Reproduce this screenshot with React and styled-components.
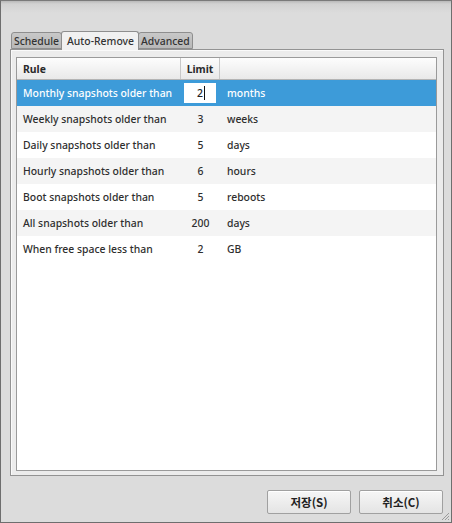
import React from 'react';
import styled, { createGlobalStyle } from 'styled-components';

const GlobalStyle = createGlobalStyle`
  html, body {
    margin: 0;
    padding: 0;
    background: #dcdcdc;
  }
  * {
    box-sizing: border-box;
  }
`;

const Window = styled.div`
  width: 452px;
  height: 523px;
  position: relative;
  display: flex;
  flex-direction: column;
  border: 1px solid #6e6e6e;
  border-top-color: #7a7a7a;
  background: linear-gradient(#b9b9b9 0px, #d2d2d2 3px, #dcdcdc 12px, #dcdcdc 100%);
  font-family: 'Noto Sans', 'DejaVu Sans', sans-serif;
  color: #2e2e2e;
  padding: 30px 8px 8px 9px;
`;

const TabBar = styled.div`
  display: flex;
  align-items: flex-end;
  padding-left: 1px;
  height: 18px;
  position: relative;
  z-index: 1;
`;

const Tab = styled.div`
  height: ${p => (p.$active ? '19px' : '17px')};
  margin-bottom: ${p => (p.$active ? '-1px' : '0')};
  padding: ${p => (p.$active ? '0 4px 0 5px' : '0 2px 0 2px')};
  display: flex;
  align-items: center;
  font-size: 10.4px;
  font-weight: 500;
  color: #333;
  border: 1px solid #8e8e8e;
  border-bottom: ${p => (p.$active ? 'none' : '1px solid #8e8e8e')};
  border-radius: 3px 3px 0 0;
  background: ${p => (p.$active
    ? '#f1f1f1'
    : 'linear-gradient(#c8c8c8, #b8b8b8)')};
  margin-right: -1px;
`;

const Pane = styled.div`
  flex: 1;
  display: flex;
  flex-direction: column;
  width: 434px;
  margin-bottom: 14px;
  border: 1px solid #939393;
  background: #ececec;
  padding: 7px 6px 4px 5px;
  box-shadow: inset 1px 1px 0 #fafafa;
`;

const Table = styled.div`
  flex: 1;
  background: #fff;
  border: 1px solid #9a9a9a;
  display: flex;
  flex-direction: column;
`;

const Header = styled.div`
  display: grid;
  grid-template-columns: 164px 39px 1fr;
  height: 22px;
  background: linear-gradient(#fdfdfd, #e9e9e9);
  border-bottom: 1px solid #b4b4b4;
`;

const HeadCell = styled.div`
  display: flex;
  align-items: center;
  justify-content: ${p => (p.$center ? 'center' : 'flex-start')};
  padding-left: ${p => (p.$center ? '0' : '6px')};
  font-size: 10.4px;
  font-weight: 700;
  color: #2a2a2a;
  border-right: ${p => (p.$last ? 'none' : '1px solid #c8c8c8')};
`;

const Row = styled.div`
  display: grid;
  grid-template-columns: 164px 39px 1fr;
  height: 26px;
  align-items: center;
  background: ${p => (p.$selected ? '#3d9bd9' : p.$alt ? '#f4f4f4' : '#fff')};
  color: ${p => (p.$selected ? '#fff' : '#2e2e2e')};
  font-size: 10.4px;
  font-weight: 500;
`;

const RuleCell = styled.div`
  padding-left: 6px;
  white-space: nowrap;
`;

const LimitCell = styled.div`
  text-align: center;
`;

const UnitCell = styled.div`
  padding-left: 7px;
`;

const EditBox = styled.div`
  width: 32px;
  height: 20px;
  margin-left: 3px;
  background: #fff;
  color: #222;
  display: flex;
  align-items: center;
  justify-content: flex-end;
  padding-right: 11px;
`;

const Caret = styled.span`
  display: inline-block;
  width: 1px;
  height: 14px;
  background: #111;
  margin-left: 1px;
`;

const Footer = styled.div`
  display: flex;
  justify-content: flex-end;
  gap: 8px;
  height: 24px;
`;

const Button = styled.button`
  width: 84px;
  height: 24px;
  border: 1px solid #a0a0a0;
  border-radius: 2px;
  background: linear-gradient(#f6f6f6, #e4e4e4);
  font-family: 'Noto Sans CJK KR', 'Noto Sans', sans-serif;
  font-size: 11.5px;
  font-weight: 700;
  color: #222;
  padding: 0;
  box-shadow: inset 0 1px 0 #fff;
`;

const Grip = styled.svg`
  position: absolute;
  right: 1px;
  bottom: 1px;
`;

const rules = [
  ['Monthly snapshots older than', '2', 'months'],
  ['Weekly snapshots older than', '3', 'weeks'],
  ['Daily snapshots older than', '5', 'days'],
  ['Hourly snapshots older than', '6', 'hours'],
  ['Boot snapshots older than', '5', 'reboots'],
  ['All snapshots older than', '200', 'days'],
  ['When free space less than', '2', 'GB'],
];

const App = () => {
  return (
    <>
      <GlobalStyle />
      <Window>
        <TabBar>
          <Tab>Schedule</Tab>
          <Tab $active>Auto-Remove</Tab>
          <Tab>Advanced</Tab>
        </TabBar>
        <Pane>
          <Table>
            <Header>
              <HeadCell>Rule</HeadCell>
              <HeadCell $center>Limit</HeadCell>
              <HeadCell $last />
            </Header>
            {rules.map(([rule, limit, unit], i) => (
              <Row key={rule} $selected={i === 0} $alt={i % 2 === 1}>
                <RuleCell>{rule}</RuleCell>
                {i === 0 ? (
                  <EditBox>{limit}<Caret /></EditBox>
                ) : (
                  <LimitCell>{limit}</LimitCell>
                )}
                <UnitCell>{unit}</UnitCell>
              </Row>
            ))}
          </Table>
        </Pane>
        <Footer>
          <Button>저장(S)</Button>
          <Button>취소(C)</Button>
        </Footer>
        <Grip width="10" height="10" viewBox="0 0 10 10">
          <path d="M9 2 L2 9 M9 5 L5 9 M9 8 L8 9" stroke="#9a9a9a" strokeWidth="1" />
        </Grip>
      </Window>
    </>
  );
};

export default App;
